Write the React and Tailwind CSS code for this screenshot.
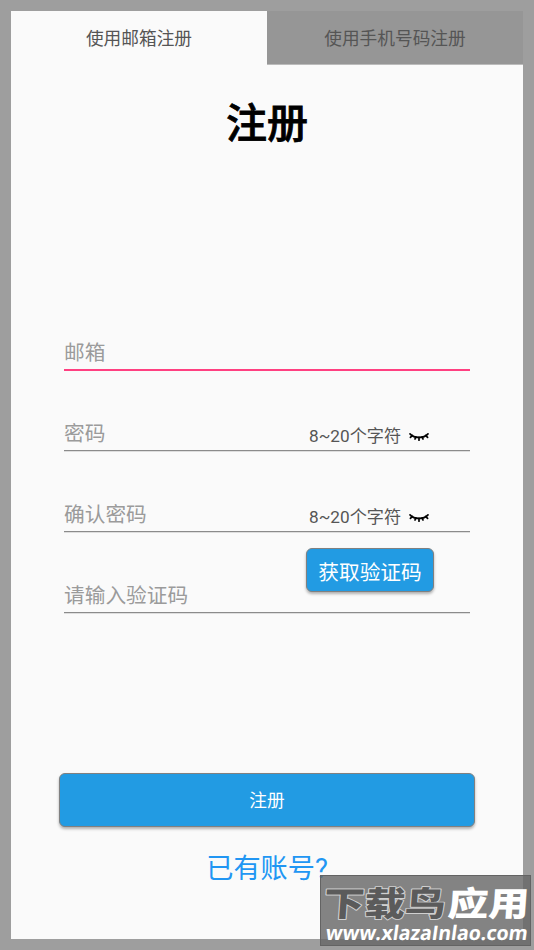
const FONT = "font-['Roboto','Noto_Sans_CJK_SC',sans-serif]"

function ClosedEye() {
  return (
    <svg width="20" height="10" viewBox="0 0 20 10" fill="none" stroke="#000" strokeWidth="1.7" strokeLinecap="round">
      <path d="M1 1.8C5.5 6.6 14.5 6.6 19 1.8" />
      <path d="M3.4 3.4L1.4 5.4M16.6 3.4L18.6 5.4M6.8 4.8L6 7M13.2 4.8L14 7M10 5.4V8.2" />
    </svg>
  )
}

function Field({ label, active, hint, children }) {
  return (
    <div className="relative h-[81px]">
      <div className={active ? "h-[41px] border-b-2 border-[#ff4081]" : "h-[40px] border-b border-[#8b8b8b] shadow-[0_1px_0_#dedede]"}>
        <div className="pt-[8px] text-[20.7px] leading-[31px] text-[#9b9b9b]">{label}</div>
      </div>
      {hint && (
        <div className="absolute left-[245px] top-[12px] flex items-center gap-[8px]">
          <span className="text-[17.2px] leading-[26px] text-[#555]">{hint}</span>
          <span className="pt-[2px]"><ClosedEye /></span>
        </div>
      )}
      {children}
    </div>
  )
}

function Watermark() {
  return (
    <div className="absolute left-[320px] top-[875px] h-[71px] w-[211px] border border-[#636363] bg-[#656565]/80">
      <svg className="overflow-visible" width="209" height="69" viewBox="0 0 209 69">
        <g fontFamily="'Noto Sans CJK SC', sans-serif" fontSize="36" fontWeight="900" paintOrder="stroke" strokeLinejoin="round">
          <text transform="translate(2 40) skewX(-4) scale(1.13 0.94)" fill="#5b5b5b" stroke="#d0d0d0" strokeWidth="2">下载鸟</text>
          <text transform="translate(126 40) skewX(-4) scale(1.13 0.94)" fill="#fff">应用</text>
        </g>
        <text transform="translate(4 63.5) skewX(-8)" textLength="202" lengthAdjust="spacingAndGlyphs" fill="#fff" fontFamily="'Open Sans', sans-serif" fontSize="20" fontWeight="700">www.xlazaInlao.com</text>
      </svg>
    </div>
  )
}

export default function App() {
  return (
    <div className={`relative h-[950px] w-[534px] overflow-hidden bg-[#9e9e9e] p-[11px] ${FONT}`}>
      <div className="flex h-[928px] flex-col bg-[#fafafa]">
        <div className="flex h-[54px] text-[17.7px] leading-[56px] text-[#555]">
          <div className="w-1/2 text-center">使用邮箱注册</div>
          <div className="w-1/2 border-b border-[#bbb] bg-[#969696] text-center">使用手机号码注册</div>
        </div>
        <h1 className="mt-[29px] text-center text-[41px] leading-[60px] font-medium text-black [-webkit-text-stroke:0.8px_black]">注册</h1>
        <div className="mx-[53px] mt-[176px] h-[443px]">
          <Field label="邮箱" active />
          <Field label="密码" hint="8~20个字符" />
          <Field label="确认密码" hint="8~20个字符" />
          <Field label="请输入验证码">
            <button className="absolute left-[242px] top-[-25px] h-[44px] w-[128px] rounded-[6px] border-[1.5px] border-[#808080] bg-[#229be3] pt-[7px] text-[20.7px] text-white shadow-[0_2px_3px_rgba(0,0,0,0.3)]">获取验证码</button>
          </Field>
        </div>
        <button className="mx-[48px] h-[54px] shrink-0 rounded-[6px] border-[1.5px] border-[#808080] bg-[#229be3] pt-[2px] text-[17.7px] text-white shadow-[0_2px_3px_rgba(0,0,0,0.3)]">注册</button>
        <a className="mt-[22px] text-center text-[27.2px] leading-[40px] text-[#2196f3]">已有账号?</a>
      </div>
      <Watermark />
    </div>
  )
}
